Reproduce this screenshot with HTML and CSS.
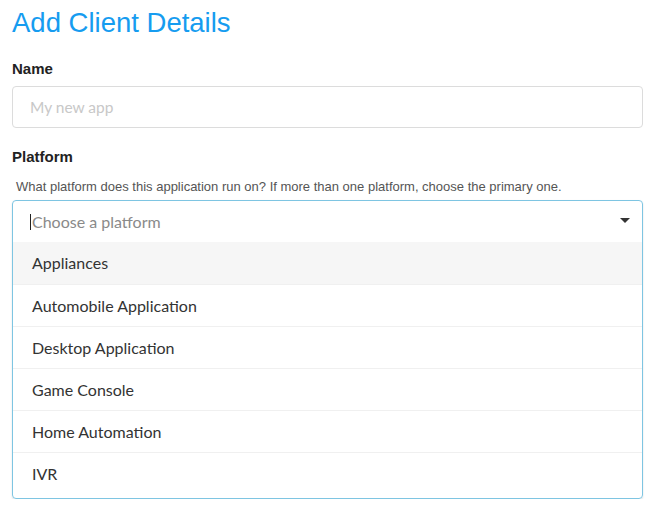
FILE: index.html
```html
<!DOCTYPE html>
<html>
<head>
<meta charset="utf-8">
<link rel="stylesheet" href="styles.css">
</head>
<body>
<div class="page">
  <h1 class="title">Add Client Details</h1>
  <label class="label label-name">Name</label>
  <div class="input"><span class="placeholder">My new app</span></div>
  <label class="label label-platform">Platform</label>
  <p class="help">What platform does this application run on? If more than one platform, choose the primary one.</p>
  <div class="select">
    <div class="select-head">
      <span class="caret-cursor"></span><span class="select-placeholder">Choose a platform</span>
      <svg class="arrow" width="10" height="5" viewBox="0 0 10 5"><path d="M0 0 H10 L5 5 Z" fill="#333"/></svg>
    </div>
    <ul class="options">
      <li class="option active">Appliances</li>
      <li class="option">Automobile Application</li>
      <li class="option">Desktop Application</li>
      <li class="option">Game Console</li>
      <li class="option">Home Automation</li>
      <li class="option">IVR</li>
    </ul>
  </div>
</div>
</body>
</html>
```
FILE: styles.css
```css
html, body {
  margin: 0;
  padding: 0;
  background: #fff;
}
.page {
  padding: 8px 8px 0 12px;
  font-family: "Liberation Sans", Arial, sans-serif;
  display: flex;
  flex-direction: column;
}
.title {
  margin: 0;
  font-size: 27.5px;
  line-height: 30px;
  font-weight: normal;
  color: #169cf0;
}
.label {
  display: block;
  font-size: 15px;
  line-height: 20px;
  font-weight: bold;
  color: #222;
}
.label-name {
  margin-top: 21px;
}
.input {
  margin-top: 7px;
  height: 42px;
  box-sizing: border-box;
  border: 1px solid #dcdcdc;
  border-radius: 4px;
  display: flex;
  align-items: center;
  padding-left: 17px;
}
.placeholder {
  font-family: Lato, sans-serif;
  font-size: 15.5px;
  line-height: 18px;
  color: #c8c8c8;
}
.label-platform {
  margin-top: 19px;
}
.help {
  margin: 12px 0 0 4px;
  font-size: 13px;
  line-height: 16px;
  color: #555;
}
.select {
  margin-top: 5px;
  border: 1px solid #7ec5e2;
  border-radius: 4px;
  box-shadow: 0 1px 2px rgba(0, 0, 0, 0.12);
  font-family: Lato, sans-serif;
  font-size: 16px;
  line-height: 18px;
}
.select-head {
  height: 41px;
  display: flex;
  align-items: center;
  padding: 0 12px 0 17px;
}
.caret-cursor {
  width: 1px;
  height: 16px;
  background: #222;
  margin-right: 1px;
}
.select-placeholder {
  color: #8a8a8a;
  flex: 1;
}
.arrow {
  display: block;
  margin-top: -3px;
}
.options {
  list-style: none;
  margin: 0;
  padding: 0 0 4px 0;
}
.option {
  height: 42px;
  box-sizing: border-box;
  display: flex;
  align-items: center;
  padding-left: 19px;
  color: #333;
  border-top: 1px solid #f0f0f0;
}
.option:first-child {
  border-top: none;
}
.option.active {
  background: #f6f6f6;
}
```
